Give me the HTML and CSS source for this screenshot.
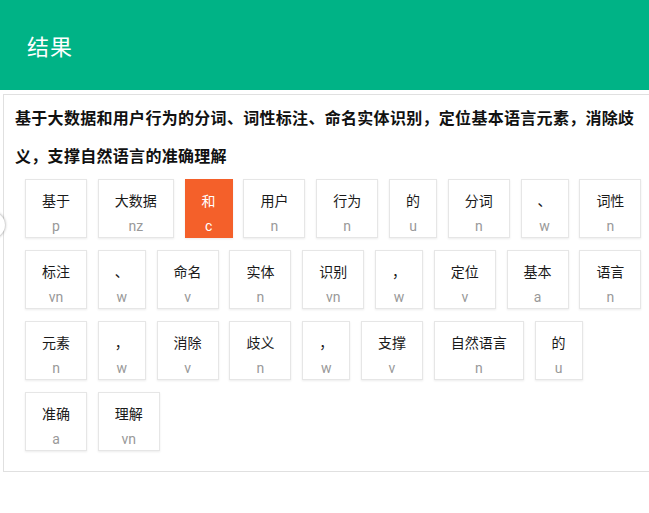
FILE: index.html
```html
<!DOCTYPE html>
<html lang="zh-CN">

<head>
    <meta charset="UTF-8">
    <meta name="viewport" content="width=device-width, initial-scale=1.0">
    <title>结果</title>
    <link rel="stylesheet" href="styles.css">
</head>

<body>

    <div class="header">
        <h1>结果</h1>
    </div>

    <div class="result-card">
        <p class="sentence">基于大数据和用户行为的分词、词性标注、命名实体识别，定位基本语言元素，消除歧义，支撑自然语言的准确理解</p>
        <div class="token-list">
            <div class="token"><span class="word">基于</span><span class="tag">p</span></div>
            <div class="token"><span class="word">大数据</span><span class="tag">nz</span></div>
            <div class="token active"><span class="word">和</span><span class="tag">c</span></div>
            <div class="token"><span class="word">用户</span><span class="tag">n</span></div>
            <div class="token"><span class="word">行为</span><span class="tag">n</span></div>
            <div class="token"><span class="word">的</span><span class="tag">u</span></div>
            <div class="token"><span class="word">分词</span><span class="tag">n</span></div>
            <div class="token"><span class="word">、</span><span class="tag">w</span></div>
            <div class="token"><span class="word">词性</span><span class="tag">n</span></div>
            <div class="token"><span class="word">标注</span><span class="tag">vn</span></div>
            <div class="token"><span class="word">、</span><span class="tag">w</span></div>
            <div class="token"><span class="word">命名</span><span class="tag">v</span></div>
            <div class="token"><span class="word">实体</span><span class="tag">n</span></div>
            <div class="token"><span class="word">识别</span><span class="tag">vn</span></div>
            <div class="token"><span class="word">，</span><span class="tag">w</span></div>
            <div class="token"><span class="word">定位</span><span class="tag">v</span></div>
            <div class="token"><span class="word">基本</span><span class="tag">a</span></div>
            <div class="token"><span class="word">语言</span><span class="tag">n</span></div>
            <div class="token"><span class="word">元素</span><span class="tag">n</span></div>
            <div class="token"><span class="word">，</span><span class="tag">w</span></div>
            <div class="token"><span class="word">消除</span><span class="tag">v</span></div>
            <div class="token"><span class="word">歧义</span><span class="tag">n</span></div>
            <div class="token"><span class="word">，</span><span class="tag">w</span></div>
            <div class="token"><span class="word">支撑</span><span class="tag">v</span></div>
            <div class="token"><span class="word">自然语言</span><span class="tag">n</span></div>
            <div class="token"><span class="word">的</span><span class="tag">u</span></div>
            <div class="token"><span class="word">准确</span><span class="tag">a</span></div>
            <div class="token"><span class="word">理解</span><span class="tag">vn</span></div>
        </div>
    </div>

    <div class="side-handle"></div>

</body>

</html>
```

FILE: styles.css
```css
html,
body {
    overflow-x: hidden;
}

body {
    font-family: Roboto, "Noto Sans CJK SC", sans-serif;
    background-color: #fff;
    color: #222;
    margin: 0;
    padding: 0;
}

.header {
    background-color: #00b386;
    height: 90px;
    display: flex;
    align-items: center;
    padding-left: 27px;
}

.header h1 {
    margin: 0;
    color: #fff;
    font-size: 22px;
    font-weight: normal;
    letter-spacing: 1px;
}

.result-card {
    margin: 4px 0 0 3px;
    width: 633px;
    padding: 5px 11px 8px 11px;
    border: 1px solid #e0e0e0;
}

.sentence {
    margin: 0 0 3px 0;
    font-size: 16px;
    letter-spacing: 0.3px;
    line-height: 38px;
    font-weight: bold;
    color: #111;
}

.token-list {
    display: flex;
    flex-wrap: wrap;
    gap: 12px 10.8px;
    padding-left: 10px;
    padding-bottom: 12px;
}

.token {
    display: flex;
    flex-direction: column;
    align-items: center;
    height: 59px;
    box-sizing: border-box;
    padding: 10px 16px 0 16px;
    border: 1px solid #e6e6e6;
    box-shadow: 0 1px 2px rgba(0, 0, 0, 0.08);
    background-color: #fff;
}

.token .word {
    font-size: 14px;
    line-height: 22px;
    color: #1a1a1a;
}

.token .tag {
    margin-top: 3px;
    font-size: 14px;
    line-height: 22px;
    color: #999;
}

.token.active {
    background-color: #f4602a;
    border-color: #f4602a;
}

.token.active .word,
.token.active .tag {
    color: #fff;
}

.side-handle {
    position: absolute;
    left: -21px;
    top: 212px;
    width: 26px;
    height: 26px;
    border-radius: 50%;
    background-color: #fff;
    box-shadow: 0 0 3px rgba(0, 0, 0, 0.45);
}
```
